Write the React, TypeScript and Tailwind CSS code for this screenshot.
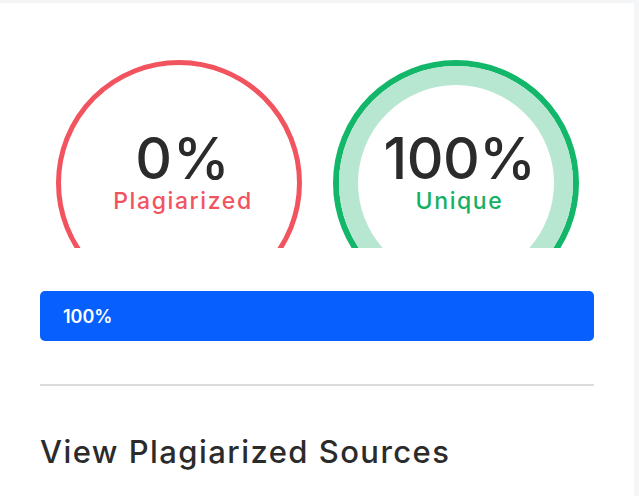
export default function App() {
  const font = { fontFamily: 'Inter, "DejaVu Sans", sans-serif' };

  return (
    <div className="min-h-screen bg-[#f4f5f7] pt-[3px] pr-[5px]" style={font}>
      <div className="h-[493px] bg-white px-10 pt-[57px]">
        <div className="grid grid-cols-2">
          <div className="flex justify-center">
            <div className="h-[188px] overflow-hidden">
              <div className="flex h-[246px] w-[246px] flex-col items-center justify-center rounded-full border-[5px] border-[#f2545f] pb-[24px] pl-[9px]">
                <div className="text-[57px] leading-[60px] font-medium tracking-[1px] text-[#2b2b2b]">0%</div>
                <div className="text-[23px] leading-[24px] font-medium tracking-[1.6px] text-[#f2545f]">Plagiarized</div>
              </div>
            </div>
          </div>
          <div className="flex justify-center">
            <div className="h-[188px] overflow-hidden">
              <div className="h-[246px] w-[246px] rounded-full border-[6px] border-[#12b76a]">
                <div className="flex h-full w-full flex-col items-center justify-center rounded-full border-[19px] border-[#b7e6d1] pb-[24px] pl-[8px]">
                  <div className="text-[57px] leading-[60px] font-medium tracking-[-0.5px] text-[#2b2b2b]">100%</div>
                  <div className="text-[23px] leading-[24px] font-medium tracking-[1.6px] text-[#17b063]">Unique</div>
                </div>
              </div>
            </div>
          </div>
        </div>

        <div className="mt-[43px] flex h-[50px] items-center rounded-[5px] bg-[#075ffd] px-[23px]">
          <span className="text-[18px] font-semibold text-white">100%</span>
        </div>

        <div className="mt-[43px] h-[2px] bg-[#dcdcdc]" />

        <h2 className="mt-[50px] text-[31px] leading-none font-medium tracking-[1.45px] text-[#2b2b2b]">
          View Plagiarized Sources
        </h2>
      </div>
    </div>
  );
}
